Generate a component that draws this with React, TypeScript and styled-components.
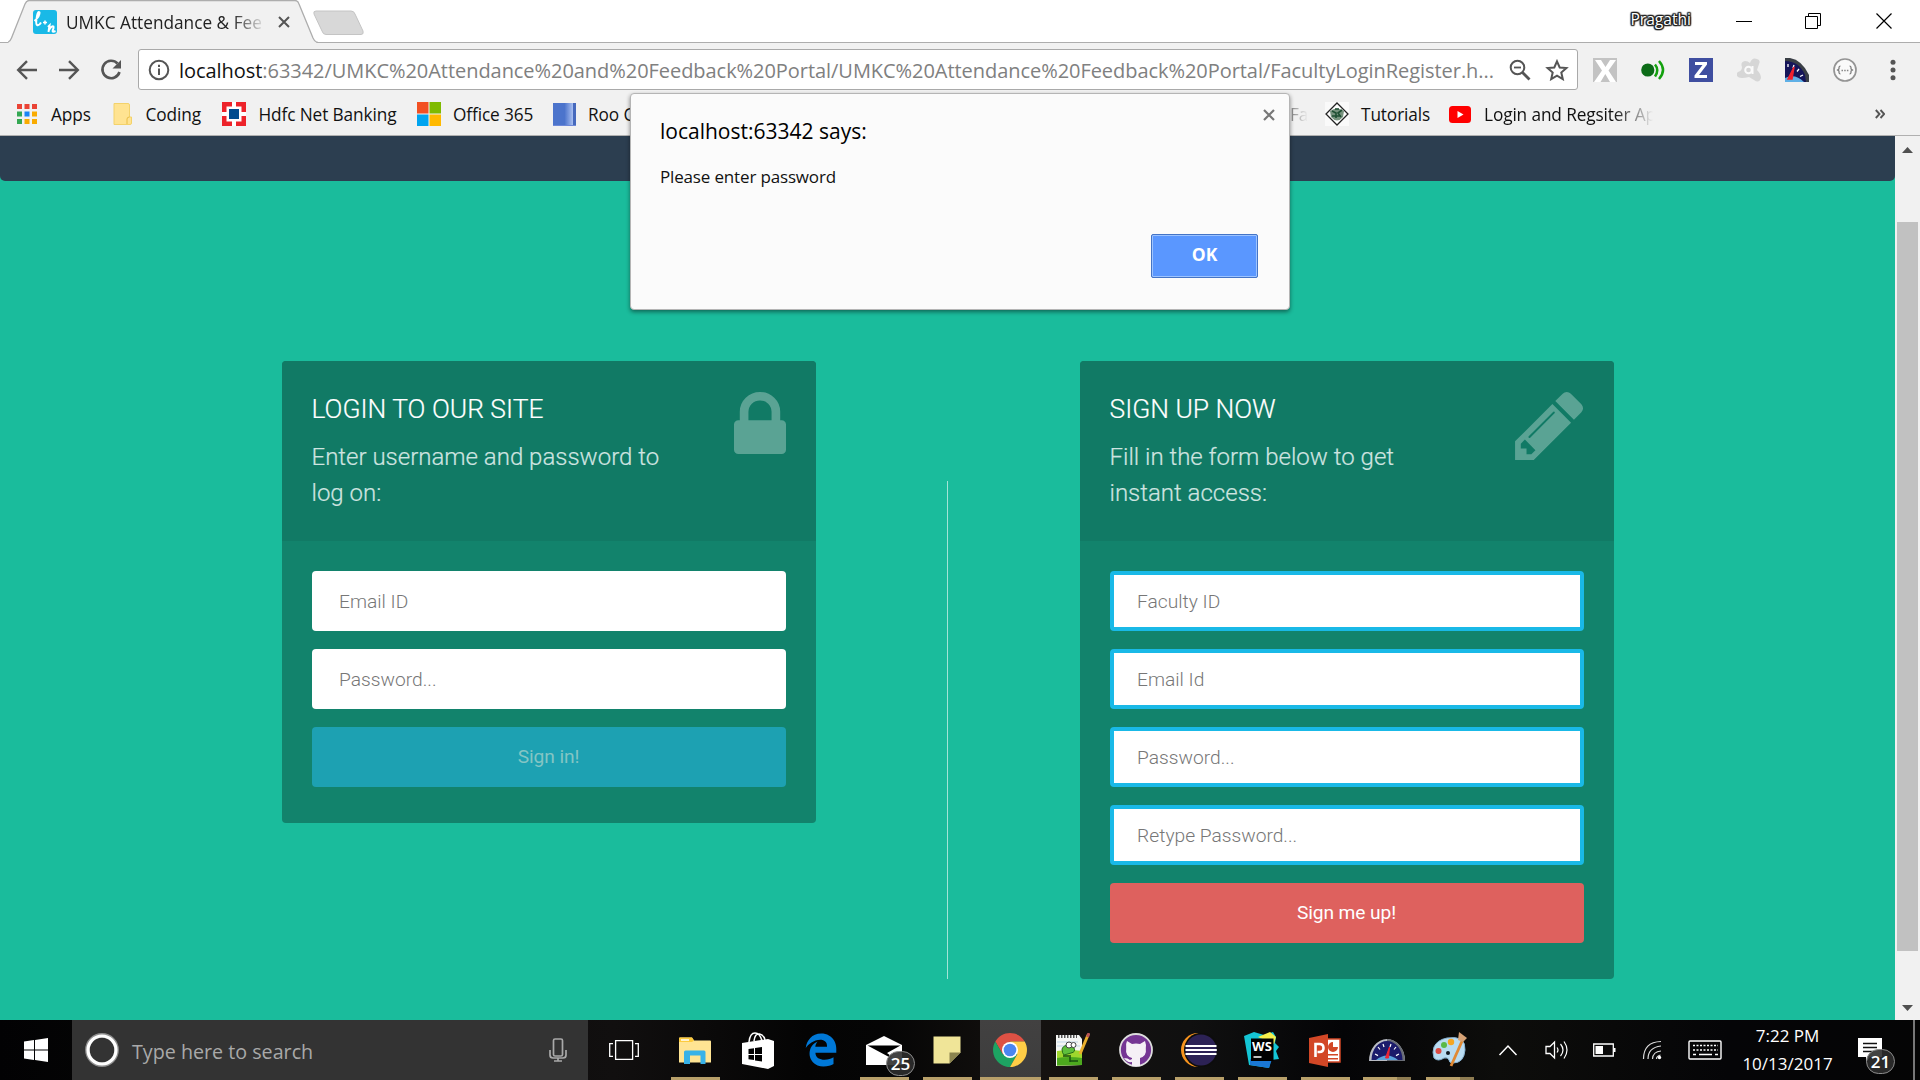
import React from "react";
import styled, { createGlobalStyle, css } from "styled-components";
import { FaEdgeLegacy } from "react-icons/fa6";

const ui = `"Open Sans", "Noto Sans", sans-serif`;

const GlobalStyle = createGlobalStyle`
  * { box-sizing: border-box; }
  body { margin: 0; overflow: hidden; font-family: ${ui}; }
`;

const Screen = styled.div`
  position: relative;
  display: flex;
  flex-direction: column;
  width: 1920px;
  height: 1080px;
  overflow: hidden;
  background: #f1f1f1;
`;

/* ---------- browser chrome ---------- */
const TabStrip = styled.header`
  display: flex;
  height: 43px;
  padding-left: 8px;
  background: #fff;
  box-shadow: inset 0 -1px #adadad;
`;
const Tab = styled.div`
  position: relative;
  display: flex;
  align-items: center;
  width: 310px;
  height: 43px;
  padding: 1px 0 0 25px;
`;
const TabShape = styled.svg`
  position: absolute;
  inset: 0;
`;
const Favicon = styled.svg`
  position: relative;
  margin-right: 9px;
`;
const TabTitle = styled.span`
  position: relative;
  width: 198px;
  overflow: hidden;
  white-space: nowrap;
  font-size: 17.25px;
  color: #222;
  mask-image: linear-gradient(90deg, #000 84%, transparent 101%);
`;
const TabClose = styled.svg`
  position: relative;
  margin-left: 14px;
`;
const NewTab = styled.svg`
  margin: 9px 0 0 -5px;
  position: relative;
`;
const WindowControls = styled.div`
  display: flex;
  align-items: center;
  margin-left: auto;
  padding: 0 28px 2px 0;
`;
const Profile = styled.span`
  font-size: 15.6px;
  line-height: 20px;
  color: #fff;
  margin-right: 45px;
  padding-bottom: 4px;
  text-shadow: 1px 0 1px #222, -1px 0 1px #222, 0 1px 1px #222, 0 -1px 1px #222,
    1px 1px 1px #222, -1px -1px 1px #222, 1px -1px 1px #222, -1px 1px 1px #222, 0 0 2px #222, 0 0 2px #222;
`;
const ControlIcon = styled.svg<{ $gap?: number }>`
  margin-left: ${(p) => p.$gap ?? 0}px;
`;

const Toolbar = styled.div`
  display: flex;
  align-items: center;
  height: 54px;
  padding: 0 0 1px 6px;
  > * { flex: none; }
`;
const NavButton = styled.span`
  display: flex;
  justify-content: center;
  width: 42px;
`;
const AddressBar = styled.div`
  display: flex;
  align-items: center;
  width: 1440px;
  height: 41px;
  margin-left: 6px;
  padding: 0 8px 0 9px;
  background: #fff;
  border: 1px solid #a9a9a9;
  border-radius: 3px;
`;
const Url = styled.span`
  flex: 1;
  margin-left: 9px;
  padding-top: 1px;
  white-space: nowrap;
  font-size: 20px;
  letter-spacing: -0.05px;
  color: #808080;
  b { font-weight: 400; color: #111; }
`;
const AddressIcons = styled.span`
  display: flex;
  gap: 14px;
`;
const Extensions = styled.div`
  display: flex;
  align-items: center;
  gap: 24px;
  margin-left: 15px;
`;
const MenuDots = styled.svg`
  margin-left: 6px;
`;

const BookmarkBar = styled.nav`
  display: flex;
  align-items: center;
  height: 39px;
  padding: 0 0 4px 17px;
  border-bottom: 1px solid #b0b0b0;
`;
const Bookmark = styled.span<{ $width: number; $slot?: number; $fade?: boolean }>`
  display: flex;
  align-items: center;
  width: ${(p) => p.$width}px;
  height: 30px;
  font-size: 17.25px;
  letter-spacing: -0.12px;
  white-space: nowrap;
  color: #111;
  svg { flex: none; }
  i { flex: none; display: flex; width: ${(p) => p.$slot ?? 0}px; }
  ${(p) => p.$fade && css`
    mask-image: linear-gradient(90deg, #000 calc(100% - 42px), rgba(0,0,0,.5) calc(100% - 20px), transparent calc(100% - 2px));
  `}
`;
const MoreMark = styled.svg`
  margin-left: auto;
  margin-right: 35px;
`;

/* ---------- web page ---------- */
const Viewport = styled.div`
  display: flex;
  height: 884px;
`;
const Page = styled.main`
  flex: 1;
  background: #1abc9c;
  font-family: Roboto, sans-serif;
`;
const PageNav = styled.div`
  height: 45px;
  background: #2c3e50;
  border-radius: 0 0 5px 5px;
`;
const Forms = styled.section`
  display: grid;
  grid-template-columns: 534px 1fr 534px;
  align-items: start;
  width: 1332px;
  margin: 180px auto 0;
`;
const Divider = styled.div`
  align-self: stretch;
  justify-self: center;
  width: 1px;
  margin: 120px 1px 0 0;
  background: #a3e4d7;
`;
const Card = styled.article`
  border-radius: 4px;
  overflow: hidden;
  background: #12836c;
`;
const CardHead = styled.div`
  display: flex;
  justify-content: space-between;
  height: 180px;
  padding: 33px 30px 0;
  background: #117a65;
`;
const Heading = styled.h3`
  margin: 0 0 15px;
  font-size: 26.4px;
  line-height: 30px;
  font-weight: 300;
  color: #fff;
  -webkit-text-stroke: 0.2px #fff;
`;
const Lead = styled.p`
  width: 356px;
  margin: 0;
  font-size: 24px;
  line-height: 36px;
  font-weight: 300;
  color: #cfe4e0;
  -webkit-text-stroke: 0.2px #cfe4e0;
`;
const HeadIcon = styled.svg`
  flex: none;
  margin-top: -2px;
  fill: #5aa394;
`;
const CardBody = styled.div`
  display: flex;
  flex-direction: column;
  gap: 18px;
  padding: 30px 30px 36px;
`;
const Field = styled.input<{ $outlined?: boolean }>`
  height: 60px;
  padding: 0 ${(p) => (p.$outlined ? 23.6 : 27.6)}px;
  border: ${(p) => (p.$outlined ? "4px solid #19b9e7" : "0")};
  border-radius: 4px;
  outline: none;
  background: ${(p) => (p.$outlined ? "linear-gradient(#fff, #fff) padding-box" : "#fff")};
  font: 300 19.2px Roboto, sans-serif;
  &::placeholder { color: #777; opacity: 1; }
`;
const Submit = styled.button<{ $tone: "blue" | "red" }>`
  height: 60px;
  padding: 0 0 1px;
  border: 0;
  border-radius: 4px;
  font: 400 19.2px Roboto, sans-serif;
  letter-spacing: -0.1px;
  ${(p) => p.$tone === "blue"
    ? css`background: #1da1b2; color: #84c5c4;`
    : css`background: #de615e; color: #fff;`}
`;
const Scrollbar = styled.aside`
  display: flex;
  flex-direction: column;
  justify-content: space-between;
  align-items: center;
  width: 25px;
  padding: 11px 0 9px;
  background: #f1f1f1;
`;
const Thumb = styled.div`
  width: 21px;
  height: 729px;
  margin-top: 14px;
  background: #c1c1c1;
`;

/* ---------- alert dialog ---------- */
const Dialog = styled.section`
  position: absolute;
  left: 630px;
  top: 93px;
  width: 660px;
  height: 217px;
  display: flex;
  flex-direction: column;
  padding: 21px 31px 31px 29px;
  background: #fbfbfb;
  border: 1px solid #b5b5b5;
  border-radius: 4px;
  box-shadow: 0 2px 4px rgba(0, 0, 0, 0.45);
`;
const DialogTitle = styled.div`
  font-size: 21px;
  line-height: 32px;
  color: #000;
`;
const DialogText = styled.div`
  margin-top: 18px;
  font-size: 17px;
  line-height: 24px;
  letter-spacing: -0.16px;
  color: #111;
`;
const DialogClose = styled.svg`
  position: absolute;
  right: 14px;
  top: 15px;
`;
const OkButton = styled.button`
  align-self: flex-end;
  width: 107px;
  height: 44px;
  margin-top: auto;
  padding: 0 0 4px;
  background: #5a97ff;
  border: 1px solid #4474c6;
  border-radius: 2px;
  box-shadow: inset 0 0 0 1px #9cc3ff;
  color: #fff;
  font: 700 17.5px ${ui};
`;

/* ---------- taskbar ---------- */
const Taskbar = styled.footer`
  display: flex;
  height: 60px;
  background: linear-gradient(90deg, #020203 0, #110f0f 32%, #040404 42%, #050505 46%, #151210 54%, #101010 62%, #040406 70%, #0d0d0b 78%, #050507 90%, #050505);
`;
const StartButton = styled.div`
  display: flex;
  align-items: center;
  justify-content: center;
  width: 72px;
`;
const Search = styled.div`
  display: flex;
  align-items: center;
  width: 516px;
  padding: 0 21px 0 13px;
  background: #333;
  color: #a9a9a9;
  font-size: 19.7px;
  span { flex: 1; margin-left: 13px; padding-top: 2px; }
`;
const TaskView = styled.div`
  display: flex;
  align-items: center;
  width: 76px;
  padding-left: 21px;
`;
const AppCell = styled.div<{ $state?: "running" | "stacked" | "active" }>`
  display: flex;
  align-items: center;
  justify-content: center;
  width: 63px;
  padding-right: 1px;
  ${(p) => p.$state === "running" && css`background: linear-gradient(#b8a06a, #b8a06a) 7px 57px / 49px 3px no-repeat;`}
  ${(p) => p.$state === "stacked" && css`padding-right: 4px; background: linear-gradient(90deg, #b8a06a 34px, #8e7c52 34px) 6px 57px / 48px 3px no-repeat;`}
  ${(p) => p.$state === "active" && css`padding-right: 2px; background: linear-gradient(#b8a06a, #b8a06a) 1px 57px / 61px 3px no-repeat, linear-gradient(#424141, #3d3d3d) 1px 0 / 61px 60px no-repeat;`}
`;
const Badged = styled.span<{ $side: number; $drop: number }>`
  position: relative;
  display: flex;
  em {
    position: absolute;
    right: ${(p) => p.$side}px;
    bottom: ${(p) => p.$drop}px;
    width: 29px;
    height: 25px;
    border: 1px solid #8b8b8b;
    border-radius: 14px;
    background: rgba(45, 45, 45, 0.9);
    color: #fff;
    font: 600 17px/23px ${ui};
    text-align: center;
  }
`;
const Tray = styled.div`
  display: flex;
  margin-left: auto;
`;
const TrayCell = styled.div<{ $width?: number; $pull?: number }>`
  display: flex;
  align-items: center;
  justify-content: center;
  width: ${(p) => p.$width ?? 48}px;
  padding-right: ${(p) => p.$pull ?? 0}px;
`;
const Clock = styled.div`
  width: 108px;
  padding: 2px 1px 0 0;
  text-align: center;
  font-size: 17px;
  line-height: 28px;
  color: #fff;
`;
const ShowDesktop = styled.div`
  width: 7px;
  border-left: 2px solid #777;
`;

const gray = { fill: "none", stroke: "#555", strokeWidth: 2.4 };
const thin = { fill: "none", stroke: "#fff", strokeWidth: 1.5 };

function Gauge() {
  return (
    <svg width="36" height="24" viewBox="0 0 36 24">
      <path d="M0 23A18 22 0 0 1 36 23z" fill="#b9bcc4" />
      <path d="M18 1A18 22 0 0 1 36 23H18z" fill="#6a6e77" />
      <path d="M2.500 22A15.500 19 0 0 1 33.500 22z" fill="#1b1b6b" />
      <path d="M7 22Q18 13 29 22z" fill="#5ba3dc" />
      <path d="M6 16l3 1.600M9 9l2 2.500M14 6l1 3M22 6l-1 3M27 9l-2 2.500M30 16l-3 1.600" stroke="#fff" strokeWidth="1.200" />
      <path d="M16.500 20L20.500 9l-1 11z" fill="#ef2533" stroke="#ef2533" />
    </svg>
  );
}

function MiniGauge() {
  return (
    <svg width="24" height="24">
      <path d="M0 0H5Q17 2 24 17v7H0z" fill="#3a3f46" />
      <path d="M0 3Q14 3 20 17l1 7H0z" fill="#15155a" />
      <path d="M0 20Q10 15 19 24H0z" fill="#5fb0e6" />
      <path d="M3 6v3M9 7l-1 3M14 11l-2 2.500M18 17l-3 1.500" stroke="#fff" strokeWidth="1.300" />
      <path d="M3 21L9 9l-2 12z" fill="#f0222e" stroke="#f0222e" strokeWidth="1.500" />
    </svg>
  );
}

const apps = ["#ea4335", "#ea4335", "#ea4335", "#34a853", "#1a85f5", "#f9ab00", "#34a853", "#f9ab00", "#f9ab00"];

function Chrome() {
  return (
    <>
      <TabStrip>
        <Tab>
          <TabShape width="310" height="43" viewBox="0 0 310 43">
            <path d="M0 43V42Q2 41 3 38L17 4Q18.500 .5 21 .5H287Q290 .5 291 4L305 38Q307 42.500 310 42.500V43z" fill="#f1f1f1" />
            <path d="M-1 42.500Q2 42 3.500 38L17 4Q18.500 .5 21 .5H287Q290 .5 291 4L305 38Q307 42.500 310 42.500" fill="none" stroke="#adadad" strokeWidth="1.300" />
          </TabShape>
          <Favicon width="24" height="24" viewBox="0 0 24 24">
            <rect width="24" height="24" rx="3" fill="#19b9e7" />
            <path d="M1.500 11Q7 6 6.500 2.500Q5 .8 4 6Q2.500 14 4 15Q6 16 8 12.500M15 17l1.500-1.500L15.500 22M16 20q3-4.500 4.500-3.500q.500 1-.800 4q-.500 2 2.800.5" fill="none" stroke="#fff" strokeWidth="2" />
            <path d="M10 12.500h4M12 10.500v4" stroke="#fff" strokeWidth="1.500" />
          </Favicon>
          <TabTitle>UMKC Attendance &amp; Fee</TabTitle>
          <TabClose width="12" height="12" viewBox="0 0 12 12"><path d="M1 1l10 10M11 1L1 11" {...gray} strokeWidth={2} /></TabClose>
        </Tab>
        <NewTab width="52" height="27" viewBox="0 0 52 27">
          <path d="M3 2H38Q41 2 42 5L50 22Q51 25.500 48 25.500H13Q10 25.500 9 22L1 5Q0 2 3 2z" fill="#d8d8d8" stroke="#c4c4c4" />
        </NewTab>
        <WindowControls>
          <Profile>Pragathi</Profile>
          <ControlIcon width="16" height="16"><path d="M0 8.500h16" stroke="#000" /></ControlIcon>
          <ControlIcon $gap={53} width="16" height="16"><path d="M.5 3.500h12v12H.5zM3.500 3V.5h12v12h-3" fill="none" stroke="#000" /></ControlIcon>
          <ControlIcon $gap={55} width="16" height="16"><path d="M.5.5l15 15M15.500.5l-15 15" stroke="#000" strokeWidth="1.200" /></ControlIcon>
        </WindowControls>
      </TabStrip>
      <Toolbar>
        <NavButton><svg width="22" height="20" viewBox="0 0 22 20"><path d="M21 10H2.500M11 1.200L2.200 10l8.800 8.800" {...gray} /></svg></NavButton>
        <NavButton><svg width="22" height="20" viewBox="0 0 22 20"><path d="M1 10h18.500M11 1.200l8.800 8.800-8.800 8.800" {...gray} /></svg></NavButton>
        <NavButton>
          <svg width="22" height="22" viewBox="0 0 22 22">
            <path d="M17.500 4.500A8.700 8.700 0 1 0 19.500 13" {...gray} strokeWidth={2.6} />
            <path d="M21 1v8.500h-8.500z" fill="#555" />
          </svg>
        </NavButton>
        <AddressBar>
          <svg width="22" height="22" viewBox="0 0 22 22"><circle cx="11" cy="11" r="9.300" {...gray} strokeWidth={2} /><path d="M11 9.500V16M11 5.700v2.200" {...gray} strokeWidth={2} /></svg>
          <Url><b>localhost</b>:63342/UMKC%20Attendance%20and%20Feedback%20Portal/UMKC%20Attendance%20Feedback%20Portal/FacultyLoginRegister.h...</Url>
          <AddressIcons>
            <svg width="22" height="22" viewBox="0 0 22 22"><circle cx="8.500" cy="8.500" r="6.800" {...gray} strokeWidth={2} /><path d="M13.500 13.500l7 7" {...gray} strokeWidth={2.800} /><path d="M5 8.500h7" {...gray} strokeWidth={1.800} /></svg>
            <svg width="24" height="22" viewBox="0 0 24 22"><path d="M12 2.300l2.700 6.200 6.700.6-5.100 4.400 1.500 6.600-5.800-3.500-5.800 3.500 1.500-6.600L2.600 9.100l6.700-.6z" {...gray} strokeWidth={2} /></svg>
          </AddressIcons>
        </AddressBar>
        <Extensions>
          <svg width="24" height="24"><rect width="24" height="24" fill="#c3c3c3" /><path d="M2 2h6l4.500 7L17 2h6l-7.500 10.500L23 24h-6l-4.700-8L7.500 24H1l8-11.500z" fill="#fff" /></svg>
          <svg width="24" height="24"><circle cx="6.800" cy="12" r="6.600" fill="#0c6b17" /><path d="M14 6.500q4.500 5.500 0 12M18 3q8 9 0 18" fill="none" stroke="#13a10e" strokeWidth="2.500" /></svg>
          <svg width="24" height="24"><rect width="24" height="24" fill="#3f4ea0" /><path d="M6 4h12v2.500L10 17h8v3H5.500v-2.500L13.500 7H6z" fill="#fff" /></svg>
          <svg width="24" height="24"><path d="M13 5q2-6 7-4q4 1 2 5l-2 6q4 4 4 8q-2 6-7 2l-5-3q-8 2-11 0q-3-3 0-5q4-1 4-5q-2-5 3-6q3 0 5 2z" fill="#d6d6d6" /><circle cx="11.500" cy="12" r="3.300" fill="none" stroke="#fafafa" strokeWidth="2" /><path d="M15.500 8v8" stroke="#fafafa" strokeWidth="2" /></svg>
          <MiniGauge />
          <svg width="24" height="24"><circle cx="12" cy="12" r="11" fill="#fafafa" stroke="#949494" strokeWidth="1.700" /><path d="M7.500 8q-1.500 0-1.500 1.500v1.500l-1.500 1 1.500 1v1.500q0 1.500 1.500 1.500M16.500 8q1.500 0 1.500 1.500v1.500l1.500 1-1.500 1v1.500q0 1.500-1.500 1.500" fill="none" stroke="#777" strokeWidth="1.200" /><path d="M8.500 12.500h7" stroke="#888" strokeWidth="1.500" strokeDasharray="1.500 1.200" /></svg>
        </Extensions>
        <MenuDots width="57" height="24"><g fill="#555"><circle cx="30" cy="4.300" r="2.500" /><circle cx="30" cy="12" r="2.500" /><circle cx="30" cy="19.700" r="2.500" /></g></MenuDots>
      </Toolbar>
      <BookmarkBar>
        <Bookmark $width={96} $slot={34}>
          <i><svg width="20" height="20">{apps.map((c, n) => <rect key={n} x={(n % 3) * 7.5} y={Math.floor(n / 3) * 7.5} width="5" height="5" fill={c} />)}</svg></i>Apps
        </Bookmark>
        <Bookmark $width={109} $slot={32.5}>
          <i><svg width="19" height="22"><path d="M1 .5h14q1.500 0 1.500 1.500v12h2v6q0 1.500-1.500 1.500H1z" fill="#ffe391" stroke="#f3d26b" /><path d="M14 21v-5q0-2 2.500-2" fill="none" stroke="#e9bd45" /></svg></i>Coding
        </Bookmark>
        <Bookmark $width={195} $slot={36.5}>
          <i><svg width="24" height="24"><rect width="24" height="24" fill="#ed232a" /><path d="M10 0h4v24h-4zM0 10h24v4H0z" fill="#fff" /><rect x="4.500" y="4.500" width="15" height="15" fill="#fff" /><rect x="7" y="7" width="10" height="10" fill="#004c8f" /></svg></i>Hdfc Net Banking
        </Bookmark>
        <Bookmark $width={136} $slot={36}>
          <i><svg width="24" height="24"><path d="M0 0h11.500v11.500H0z" fill="#f25022" /><path d="M12.500 0H24v11.500H12.500z" fill="#7fba00" /><path d="M0 12.500h11.500V24H0z" fill="#00a4ef" /><path d="M12.500 12.500H24V24H12.500z" fill="#ffb900" /></svg></i>Office 365
        </Bookmark>
        <Bookmark $width={737} $slot={35}>
          <i><svg width="23" height="23"><defs><linearGradient id="roo"><stop offset=".5" stopColor="#4c74cc" /><stop offset=".85" stopColor="#a4bbef" /><stop offset=".87" stopColor="#4669bd" /></linearGradient></defs><rect width="23" height="23" fill="url(#roo)" /><path d="M0 22.500h23" stroke="#6d88d8" /></svg></i>Roo C
        </Bookmark>
        <Bookmark $width={20} $fade>Fa</Bookmark>
        <Bookmark $width={139} $slot={51}>
          <i><svg width="39" height="24" viewBox="-15 0 39 24"><rect width="24" height="24" fill="#fafafa" /><path d="M12 1l11 11-11 11L1 12z" fill="#fff" stroke="#222" strokeWidth="1.300" /><path d="M5 9q7-5 14 0l-1 6q-6 7-12 0z" fill="#76927d" /><path d="M7 9l4 2v5M17 8l-4 3 3 4M10 7h4M7 14h8" fill="none" stroke="#1f4f33" strokeWidth="1.600" /></svg></i>Tutorials
        </Bookmark>
        <Bookmark $width={206} $slot={35} $fade>
          <i><svg width="22" height="17"><rect width="22" height="17" rx="3.500" fill="#f00" /><path d="M8.500 5l6 3.500-6 3.500z" fill="#fff" /></svg></i>Login and Regsiter Ap
        </Bookmark>
        <MoreMark width="10" height="10"><path d="M.8 1l3.700 4-3.700 4M5.500 1l3.700 4-3.700 4" {...gray} strokeWidth={1.900} /></MoreMark>
      </BookmarkBar>
    </>
  );
}

function WebPage() {
  return (
    <Viewport>
      <Page>
        <PageNav />
        <Forms>
          <Card>
            <CardHead>
              <div>
                <Heading>LOGIN TO OUR SITE</Heading>
                <Lead>Enter username and password to log on:</Lead>
              </div>
              <HeadIcon width="52" height="62" viewBox="0 128 1152 1408" preserveAspectRatio="none">
                <path d="M320 768h512V576q0-106-75-181t-181-75-181 75-75 181v192zm832 96v576q0 40-28 68t-68 28H96q-40 0-68-28t-28-68V864q0-40 28-68t68-28h32V576q0-184 132-316t316-132 316 132 132 316v192h32q40 0 68 28t28 68z" />
              </HeadIcon>
            </CardHead>
            <CardBody>
              <Field placeholder="Email ID" />
              <Field placeholder="Password..." />
              <Submit $tone="blue">Sign in!</Submit>
            </CardBody>
          </Card>
          <Divider />
          <Card>
            <CardHead>
              <div>
                <Heading>SIGN UP NOW</Heading>
                <Lead>Fill in the form below to get instant access:</Lead>
              </div>
              <HeadIcon width="69" height="68" viewBox="128 149 1535 1515">
                <path d="M491 1536l91-91-235-235-91 91v107h128v128h107zm523-928q0-22-22-22-10 0-17 7l-542 542q-7 7-7 17 0 22 22 22 10 0 17-7l542-542q7-7 7-17zm-54-192l416 416-832 832H128v-416zm683 96q0 53-37 90l-166 166-416-416 166-165q36-38 90-38 53 0 91 38l235 234q37 39 37 91z" />
              </HeadIcon>
            </CardHead>
            <CardBody>
              <Field $outlined placeholder="Faculty ID" />
              <Field $outlined placeholder="Email Id" />
              <Field $outlined placeholder="Password..." />
              <Field $outlined placeholder="Retype Password..." />
              <Submit $tone="red">Sign me up!</Submit>
            </CardBody>
          </Card>
        </Forms>
      </Page>
      <Scrollbar>
        <svg width="11" height="6"><path d="M0 6L5.500 0 11 6z" fill="#505050" /></svg>
        <Thumb />
        <svg width="11" height="6"><path d="M0 0h11L5.500 6z" fill="#505050" /></svg>
      </Scrollbar>
    </Viewport>
  );
}

function Alert() {
  return (
    <Dialog>
      <DialogTitle>localhost:63342 says:</DialogTitle>
      <DialogText>Please enter password</DialogText>
      <DialogClose width="12" height="12"><path d="M1 1l10 10M11 1L1 11" stroke="#777" strokeWidth="2.200" /></DialogClose>
      <OkButton>OK</OkButton>
    </Dialog>
  );
}

function Desktop() {
  return (
    <Taskbar>
      <StartButton>
        <svg width="24" height="24" viewBox="0 0 24 24" fill="#fff"><path d="M0 3.500l10-1.400v9.400H0zM11 2l13-1.900v11.400H11zM0 12.500h10v9.400L0 20.500zM11 12.500h13v11.400L11 22z" /></svg>
      </StartButton>
      <Search>
        <svg width="34" height="34"><circle cx="17" cy="17" r="14.600" fill="none" stroke="#8f8f8f" strokeWidth="4.600" /><circle cx="17" cy="17" r="14" fill="none" stroke="#fff" strokeWidth="3.200" /></svg>
        <span>Type here to search</span>
        <svg width="18" height="24" fill="none" stroke="#a9a9a9" strokeWidth="1.700"><rect x="4.500" y="1" width="9" height="17" rx="1.500" /><path d="M1 12v5q0 3 3 3h10q3 0 3-3v-5M9 20v3M5 23h8" /></svg>
      </Search>
      <TaskView>
        <svg width="30" height="20" {...thin} strokeWidth={1.300}><path d="M6.600.7h17v18.600h-17zM4 3.700H.7v12.600H4M26 3.700h3.300v12.600H26" /></svg>
      </TaskView>
      <AppCell $state="running">
        <svg width="32" height="27"><path d="M0 1.500Q0 .5 1 .5h12l2 3h16q1 0 1 1V25.500H0z" fill="#ffe493" /><path d="M0 1.500Q0 .5 1 .5h12l2 3-2 1.500H0z" fill="#fdcb3d" /><path d="M2 3h8" stroke="#fff" strokeWidth="1.500" /><path d="M5 27V15q0-1.500 1.500-1.500h18.500q1.500 0 1.500 1.500v12h-5v-8.500H11V27z" fill="#38b2e8" /></svg>
      </AppCell>
      <AppCell>
        <svg width="33" height="37"><path d="M7 10Q8 1 13 1t7 8M12 9q1-8 5.500-7T23 8" fill="none" stroke="#fff" strokeWidth="1.500" /><path d="M0 11l26-4v30L0 32z" fill="#fff" /><path d="M26 7l6 2v25l-6 3z" fill="#fff" /><path d="M6.500 17l5.500-.8v5.800H6.500zM13 16l7-1v7h-7zM6.500 23H12v5l-5.500-.8zM13 23h7v6.500l-7-1z" fill="#000" /></svg>
      </AppCell>
      <AppCell><FaEdgeLegacy size={34} color="#0078d7" /></AppCell>
      <AppCell $state="running">
        <Badged $side={-13} $drop={-11}>
          <svg width="36" height="29"><path d="M0 9L18 0l18 9v20H0z" fill="#fff" /><path d="M1.500 9.500h33L21 17l4 3-2 1z" fill="#000" /></svg>
          <em>25</em>
        </Badged>
      </AppCell>
      <AppCell $state="running">
        <svg width="28" height="28"><path d="M.5.500h27v16L16.500 27.500H.5z" fill="#f0e598" /><path d="M27.500 16.500H16.500v11z" fill="#8b844f" /></svg>
      </AppCell>
      <AppCell $state="active">
        <svg width="34" height="34" viewBox="0 0 34 34"><path d="M2.300 8.500A17 17 0 0 1 31.700 8.500H17L9.700 21.300z" fill="#dd5144" /><path d="M2.300 8.500A17 17 0 0 0 17 34l7.300-12.800L9.700 21.300z" fill="#1da362" /><path d="M31.700 8.500A17 17 0 0 1 17 34l7.300-12.800L17 8.500z" fill="#ffcd46" /><circle cx="17" cy="17" r="8" fill="#fff" /><circle cx="17" cy="17" r="6.300" fill="#4a86f0" /></svg>
      </AppCell>
      <AppCell $state="running">
        <svg width="34" height="34"><path d="M0 2h23l3 4v26L0 33z" fill="#f4f6f4" /><path d="M2 3.500h19" stroke="#555" strokeWidth="3" strokeDasharray="1.500 1.500" /><path d="M1 9h21M1 13h23" stroke="#bfd5e8" /><path d="M1 18q12-2 25 0v14L1 32.500z" fill="#9fd72d" /><path d="M1 25q12-2 25 0v7L1 32.500z" fill="#4da91e" /><path d="M6 16q2-5 8-3l4 2q2 4-3 5l-7 2q-2-2-2-6z" fill="#5ebf3c" stroke="#276d18" /><circle cx="13" cy="12" r="3" fill="#fff" stroke="#444" /><circle cx="17.500" cy="12" r="2.500" fill="#fff" stroke="#444" /><path d="M7 23h8M14 28h8M14 24v5" stroke="#184f10" strokeWidth="1.500" /><path d="M32 2l-8 19" stroke="#eab02e" strokeWidth="3" /><path d="M33 0l-1.500 4" stroke="#b55" strokeWidth="3" /></svg>
      </AppCell>
      <AppCell $state="running">
        <svg width="34" height="34"><circle cx="17" cy="17" r="16" fill="#753694" stroke="#ddd" strokeWidth="1.800" /><path d="M8 8l5 3q4-1 8 0l5-3q1.500 4 .8 7Q28 23 21 25v8h-8v-4q-5 1-8-4q4 0 6 2l2-1v-1Q6 23 7.200 15Q6.500 11 8 8z" fill="#f5f0f6" /></svg>
      </AppCell>
      <AppCell $state="running">
        <svg width="36" height="34"><circle cx="17" cy="17" r="17" fill="#f7941e" /><circle cx="20.200" cy="17" r="17.200" fill="#0d0d0d" /><circle cx="20" cy="17" r="15.600" fill="#2c2255" /><path d="M4.500 13h31M4.500 17h31.300M4.500 21h31" stroke="#fff" strokeWidth="1.900" /></svg>
      </AppCell>
      <AppCell $state="running">
        <svg width="36" height="36"><path d="M0 4l10-4 10 3 9-3 3 5-1 6 4 4-3 4 3 8-8 1-2 8-20-3z" fill="#14c5d5" /><path d="M14 5l12-5 6 5-2 7z" fill="#f4ef4b" /><path d="M6 27h22l-3 9-19-3z" fill="#1a78d6" /><rect x="7" y="6.500" width="22.500" height="22.500" fill="#000" /><text x="8" y="19" fontFamily="Open Sans" fontSize="13" fontWeight="700" fill="#fff" textLength="20">WS</text><path d="M9.500 25h8" stroke="#fff" strokeWidth="1.500" /></svg>
      </AppCell>
      <AppCell $state="running">
        <svg width="32" height="33"><path d="M18 5h13v23H18z" fill="#fff" stroke="#d24726" strokeWidth="1.500" /><path d="M24 8a5 5 0 1 0 5 5h-5zM19 20h10v1.500H19zM19 24h10v1.500H19z" fill="#d24726" /><path d="M0 4l19-4v33L0 29z" fill="#d24726" /><path d="M6.500 23V10h4q4 0 4 4t-4 4h-2" fill="none" stroke="#fff" strokeWidth="2.600" /></svg>
      </AppCell>
      <AppCell $state="stacked"><Gauge /></AppCell>
      <AppCell $state="stacked">
        <svg width="36" height="36"><path d="M15 6Q34 3 33 18q-1 13-12 13q-4 0-4-3q-1-3-5-2q-6 4-10 0Q0 20 2 15 5 8 15 6z" fill="#b9dcf2" stroke="#87b1cf" /><circle cx="6.500" cy="19" r="3" fill="#dd4b42" /><circle cx="12" cy="13" r="3" fill="#5bb948" /><circle cx="19" cy="10" r="3.200" fill="#f5a623" /><circle cx="16" cy="21" r="2" fill="#101820" /><path d="M31 7L19 34" stroke="#e08a35" strokeWidth="2.800" /><path d="M27 0l8 6-4 4-5-2z" fill="#d6a376" /></svg>
      </AppCell>
      <Tray>
        <TrayCell><svg width="20" height="12"><path d="M1.500 11L10 2l8.500 9" {...thin} /></svg></TrayCell>
        <TrayCell><svg width="23" height="20"><path d="M1 6.500h4L9.500 2v16L5 13.500H1z" {...thin} strokeWidth={1.300} /><path d="M12 7.500q2 2.500 0 5M15.500 4q5 6 0 12M19 1.500q6 8.500 0 17" {...thin} strokeWidth={1.200} /></svg></TrayCell>
        <TrayCell><svg width="24" height="14"><path d="M1.700 1h19.600v12H1.700z" {...thin} strokeWidth={1.300} /><path d="M3.500 3H11v8H3.500z" fill="#fff" /><path d="M22.500 5v4" stroke="#fff" strokeWidth="2" /></svg></TrayCell>
        <TrayCell><svg width="20" height="20"><path d="M1.500 19Q1.500 2 19 1.500M6 19Q6 7.500 19 6M10.500 19Q11 11.500 19 11M14.500 19q0-3 4-4" {...thin} stroke="#ddd" strokeWidth={1.200} /><circle cx="17.500" cy="17.500" r="1.700" fill="#fff" /></svg></TrayCell>
        <TrayCell $width={58}><svg width="34" height="20"><rect x="1" y="1" width="32" height="18" {...thin} strokeWidth={1.400} rx="1" /><path d="M5 5.500h25M5 10h25" {...thin} strokeDasharray="2 1.500" /><path d="M5 14.500h3M11 14.500h13M27 14.500h3" {...thin} /></svg></TrayCell>
        <Clock>7:22 PM<br />10/13/2017</Clock>
        <TrayCell $width={71} $pull={14}>
          <Badged $side={-12} $drop={-11}>
            <svg width="25" height="25"><path d="M0 0h24v19H12l-4 5v-5H0z" fill="#fff" /><path d="M5 5.500h14M5 9.500h14M5 13.500h10" stroke="#111" strokeWidth="1.300" /></svg>
            <em>21</em>
          </Badged>
        </TrayCell>
        <ShowDesktop />
      </Tray>
    </Taskbar>
  );
}

export default function App() {
  return (
    <Screen>
      <GlobalStyle />
      <Chrome />
      <WebPage />
      <Alert />
      <Desktop />
    </Screen>
  );
}
